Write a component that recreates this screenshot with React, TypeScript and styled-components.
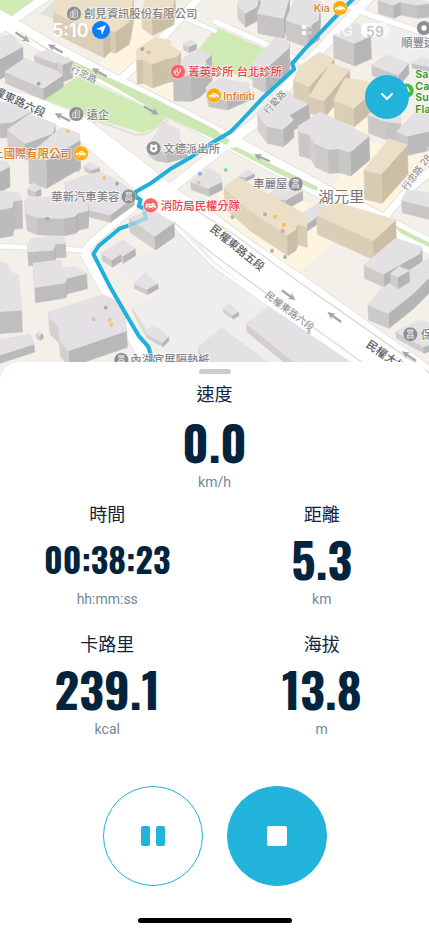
import React from "react";
import styled, { createGlobalStyle, css } from "styled-components";

const cyan = "#21b3da";
const navy = "#02243c";

const GlobalStyle = createGlobalStyle`
  * { box-sizing: border-box; }
  body {
    margin: 0;
    background: #ffffff;
    font-family: Roboto, "Noto Sans CJK TC", sans-serif;
    -webkit-font-smoothing: antialiased;
  }
`;

const Screen = styled.main`
  position: relative;
  display: flex;
  flex-direction: column;
  min-height: 100vh;
  overflow: hidden;
`;

const MapView = styled.svg`
  display: block;
  width: 100%;
  height: 388px;
  background: #f3f0ea;
`;

const MapText = styled.text<{ $color?: string; $size?: number; $weight?: number }>`
  font-family: Inter, "Noto Sans CJK TC", sans-serif;
  font-size: ${(p) => p.$size ?? 34}px;
  font-weight: ${(p) => p.$weight ?? 500};
  fill: ${(p) => p.$color ?? "#858588"};
  stroke: #ffffff;
  stroke-width: 5px;
  stroke-opacity: 0.7;
  stroke-linejoin: round;
  paint-order: stroke;
`;

const StatusBar = styled.header`
  position: absolute;
  inset: 20px 40px auto 52px;
  display: flex;
  align-items: center;
  justify-content: space-between;
  height: 20px;
  color: #ffffff;
  font-family: Inter, sans-serif;
  font-size: 18px;
  font-weight: 600;
`;

const StatusGroup = styled.div<{ $gap: number }>`
  display: flex;
  align-items: center;
  gap: ${(p) => p.$gap}px;
`;

const Network = styled.span`
  font-size: 15px;
  font-weight: 500;
  opacity: 0.85;
`;

const Battery = styled.span`
  display: grid;
  place-items: center;
  width: 28px;
  height: 14px;
  border-radius: 5px;
  background: linear-gradient(90deg, #ffffff 58%, #ffffff99 58%);
  color: #c9c7c5;
  font-size: 14px;
`;

const CollapseButton = styled.button`
  position: absolute;
  top: 75px;
  right: 20px;
  display: grid;
  place-items: center;
  width: 44px;
  height: 44px;
  padding: 0;
  border: 0;
  border-radius: 50%;
  background: ${cyan};
`;

const Sheet = styled.section`
  position: relative;
  display: flex;
  flex: 1;
  flex-direction: column;
  align-items: center;
  margin-top: -26px;
  padding: 7px 0 8px;
  border-radius: 20px 20px 0 0;
  background: #ffffff;
`;

const Handle = styled.div`
  width: 32px;
  height: 5px;
  border-radius: 3px;
  background: #c9ccd1;
`;

const Metrics = styled.div`
  display: grid;
  grid-template-columns: 1fr 1fr;
  width: 100%;
  margin-top: 9px;
`;

const MetricLabel = styled.h2`
  margin: 0;
  color: #12233f;
  font-size: 18px;
  font-weight: 400;
  line-height: 24px;
`;

const MetricValue = styled.div<{ $small?: boolean }>`
  height: 64px;
  color: ${navy};
  font-family: Oswald, Roboto, sans-serif;
  font-size: ${(p) => (p.$small ? 34 : 48)}px;
  font-weight: 700;
  line-height: 64px;
`;

const MetricUnit = styled.div`
  color: #71879a;
  font-size: 14px;
  line-height: 16px;
`;

const MetricBox = styled.div<{ $wide?: boolean }>`
  display: flex;
  flex-direction: column;
  align-items: center;
  height: 130px;
  ${(p) => p.$wide && css`
    grid-column: 1 / -1;
    height: 120px;

    ${MetricValue} {
      height: 67px;
      line-height: 70px;
    }
  `}
`;

const Controls = styled.div`
  display: flex;
  gap: 24px;
  margin-top: 23px;
`;

const RoundButton = styled.button<{ $filled?: boolean }>`
  display: grid;
  place-items: center;
  width: 100px;
  height: 100px;
  padding: 0;
  border: 1px solid ${cyan};
  border-radius: 50%;
  background: ${(p) => (p.$filled ? cyan : "#ffffff")};
`;

const HomeIndicator = styled.div`
  width: 154px;
  height: 5px;
  margin-top: auto;
  border-radius: 3px;
  background: #000000;
`;

/* ---------- map drawing ---------- */

type Tone = "g" | "t";
type BuildingData = [Tone, number, string];

const shades: Record<Tone, { roof: string; light: number[]; dark: number[] }> = {
  g: { roof: "#e3e1e3", light: [212, 208, 208], dark: [182, 181, 182] },
  t: { roof: "#ecdfc8", light: [224, 211, 188], dark: [203, 190, 167] },
};

const buildings: BuildingData[] = [
  ["t", 65, "162,-10 160,35 310,108 330,90 345,95 385,68 390,50 400,-10"],
  ["t", 55, "425,30 440,-10 525,-10 518,20 455,52"],
  ["t", 72, "410,150 465,112 510,122 512,138 542,155 530,170 500,176 455,192 430,178 410,180"],
  ["g", 18, "550,132 572,120 588,130 565,140"],
  ["g", 78, "520,225 555,170 600,150 634,165 615,182 620,192 595,215 572,226"],
  ["g", 60, "-10,110 35,105 68,140 -10,182"],
  ["g", 22, "103,165 140,150 190,172 170,190"],
  ["g", 52, "172,182 200,170 216,182 186,194"],
  ["g", 35, "15,215 75,175 188,225 130,265"],
  ["g", 45, "-10,305 40,308 92,335 40,365 -10,370"],
  ["g", 50, "22,390 88,342 165,372 158,400 75,430"],
  ["g", 85, "86,465 185,382 238,402 240,420 138,480"],
  ["g", 15, "252,498 270,488 298,502 275,510"],
  ["g", 20, "82,565 100,550 122,565 105,575"],
  ["g", 60, "-10,480 22,485 28,500 -10,520"],
  ["g", 85, "-10,572 58,580 66,600 40,602 36,622 -10,630"],
  ["g", 22, "195,548 260,525 300,516 340,535 402,575 402,592 330,645 250,625 210,590"],
  ["g", 52, "75,600 92,590 150,592 240,590 264,610 262,632 235,638 225,648 190,655 110,652 80,640"],
  ["g", 42, "388,655 450,630 522,668 465,708"],
  ["g", 32, "445,435 490,368 538,390 540,420 560,440 500,456 465,450"],
  ["g", 24, "572,545 625,503 662,525 665,545 625,565"],
  ["g", 42, "712,15 722,-20 780,-20 770,20 735,40"],
  ["g", 60, "772,40 800,-30 868,-10 850,55"],
  ["g", 60, "858,60 885,-5 960,5 955,60 922,82"],
  ["g", 70, "757,190 825,113 868,128 865,145 795,208"],
  ["g", 30, "618,262 660,235 745,250 748,270 680,300 625,290"],
  ["g", 52, "772,340 800,310 860,275 928,310 868,345 880,360 848,388 800,378"],
  ["g", 68, "1000,105 1072,68 1112,108 1062,130"],
  ["g", 32, "1115,195 1160,165 1225,190 1195,225"],
  ["g", 15, "1235,190 1262,172 1290,182 1290,200"],
  ["t", 52, "880,240 897,200 958,157 1002,177 927,260"],
  ["t", 50, "927,290 992,190 1048,210 972,302"],
  ["t", 56, "1002,300 1035,235 1105,245 1120,275 1060,325"],
  ["g", 40, "1134,0 1200,-20 1290,10 1250,15 1200,5 1180,15"],
  ["g", 72, "895,378 960,337 1107,408 1050,456 1018,446 985,448 945,430 930,405 897,395"],
  ["g", 55, "1104,345 1130,320 1200,330 1202,370 1160,365"],
  ["g", 58, "1190,395 1252,330 1300,340 1300,390 1222,408"],
  ["t", 88, "1092,510 1167,417 1222,435 1144,522"],
  ["g", 12, "717,527 742,510 762,520 735,532"],
  ["g", 28, "797,590 852,550 907,572 857,600"],
  ["g", 22, "862,668 962,605 987,625 907,680"],
  ["t", 62, "672,562 712,532 918,645 920,680 892,672 885,690 862,705 750,632"],
  ["t", 58, "950,645 1002,605 1187,660 1120,722"],
  ["g", 38, "1205,600 1222,570 1290,580 1290,622"],
  ["g", 42, "82,735 95,715 160,710 192,712 196,730 165,732 160,750 85,755"],
  ["g", 46, "100,790 180,780 190,805 222,800 260,820 200,835 195,848 105,862"],
  ["g", 66, "-10,785 20,788 30,815 55,825 65,930 -10,935"],
  ["g", 24, "-10,1020 90,1003 102,1032 -10,1068"],
  ["g", 50, "146,935 310,885 345,900 375,940 380,992 205,1052 180,1020 176,980 150,955"],
  ["g", 15, "108,1000 118,994 128,1000 118,1006"],
  ["g", 22, "305,760 370,720 405,745 368,768 362,762 335,780"],
  ["g", 16, "402,850 435,820 473,850 440,868"],
  ["g", 12, "397,925 440,990 465,978 505,1010 487,1028 440,1002"],
  ["g", 30, "595,1040 665,983 820,1100 620,1090"],
  ["g", 12, "669,925 687,912 715,935 697,945"],
  ["g", 26, "739,970 807,920 1070,1100 910,1110"],
  ["g", 40, "1092,795 1187,715 1265,740 1260,760 1150,822"],
  ["g", 45, "1104,915 1140,870 1230,810 1300,765 1300,820 1240,880 1165,940"],
  ["g", 34, "1172,820 1197,800 1227,812 1192,832"],
  ["g", 20, "1187,995 1262,960 1300,975 1300,1030 1270,1040"],
];

function Building({ data }: { data: BuildingData }) {
  const [tone, h, raw] = data;
  const pts = raw.split(" ").map((p) => p.split(",").map(Number));
  const area = pts.reduce((s, [x, y], i) => {
    const [nx, ny] = pts[(i + 1) % pts.length];
    return s + x * ny - nx * y;
  }, 0);
  const ring = area > 0 ? pts : [...pts].reverse();
  const { roof, light, dark } = shades[tone];
  const walls = ring
    .map((a, i) => ({ a, b: ring[(i + 1) % ring.length] }))
    .filter(({ a, b }) => b[0] < a[0])
    .sort((p, q) => p.a[1] + p.b[1] - q.a[1] - q.b[1]);
  return (
    <g strokeLinejoin="round">
      {walls.map(({ a, b }, i) => {
        const dx = b[0] - a[0];
        const dy = b[1] - a[1];
        const t = Math.min(1, Math.max(0, 0.6 + (0.9 * dy) / Math.hypot(dx, dy)));
        const fill = `rgb(${light.map((c, k) => Math.round(c + (dark[k] - c) * t)).join(",")})`;
        return (
          <polygon
            key={i}
            fill={fill}
            stroke={fill}
            strokeWidth={2}
            points={`${a} ${b} ${b[0] + 2},${b[1] + h} ${a[0] + 2},${a[1] + h}`}
          />
        );
      })}
      <polygon points={raw} fill={roof} stroke={roof} strokeWidth={3} />
    </g>
  );
}

const roads: [number, string][] = [
  [24, "M-10 95L140-10"],
  [22, "M350 250L440 165L545 50L600-10"],
  [12, "M545 50L650 95"],
  [16, "M640 62L780 125L915 190"],
  [16, "M1030 10L1110 45L1290 105"],
  [28, "M500 575L680 432L770 365L900 215L1110-10"],
  [46, "M-10 50L160 150L350 250L560 355L690 425L980 580L1150 665L1300 745"],
  [22, "M1300 505L1215 580L1150 655"],
  [22, "M435 590L270 733L255 755"],
  [14, "M255 752L200 747L-10 738"],
  [34, "M255 755L330 890L450 1100"],
];

const mainRoad =
  "M-10 262L110 292L255 352L430 485L540 575L642 640L762 728L900 820L1012 900L1162 1008L1300 1105V1170H1160L1062 1093L792 910L642 802L520 680L400 565L250 432L165 372L-10 300Z";

const route = "M1062-6L997 60L912 150L877 190L882 208L792 290L712 375L692 395L642 425L575 470L510 508L455 548L405 577L408 592L422 600L416 618L430 625";
const routeTail = "M385 677L360 685L296 738L280 762L330 860L400 980L418 1010L445 1040L460 1090";

const dots: [number, number, string][] = [
  [427, 147, "#a9a6a3"], [446, 157, "#f5bd63"], [116, 251, "#aaa9aa"], [203, 393, "#f5c27b"],
  [233, 509, "#b9b8b6"], [313, 534, "#f5c27b"], [351, 551, "#aaa9aa"], [142, 656, "#aaa9aa"],
  [600, 521, "#82aef2"], [596, 548, "#f5c27b"], [677, 510, "#86e0a0"], [697, 651, "#b9b1a8"],
  [795, 643, "#b9b1a8"], [825, 650, "#f5bd63"], [852, 674, "#f5bd63"], [848, 693, "#f29c94"],
  [1154, 584, "#f5bd63"], [816, 752, "#b5b0aa"], [855, 771, "#b5b0aa"], [317, 923, "#b0afb0"],
  [281, 958, "#f5a8cd"], [329, 959, "#f5c27b"], [334, 974, "#f5c27b"], [927, 995, "#c0bdb8"],
];

const arrows: [number, number, number][] = [
  [68, 111, 33], [166, 146, 209], [298, 218, 209], [454, 331, 29], [187, 352, 206],
  [786, 474, 204], [866, 885, 36], [1003, 952, 215], [1227, 1069, 214],
];

type PinKind = "car" | "office" | "shop" | "health" | "badge" | "fire" | "tree" | "dot";
const pins: [number, number, string, PinKind][] = [
  [222, 41, "#8f8e90", "office"], [229, 342, "#8f8e90", "office"],
  [534, 215, "#f96368", "health"], [642, 286, "#ffac08", "car"],
  [1020, 24, "#ffac08", "car"], [1272, 84, "#8f8e90", "dot"],
  [243, 460, "#ffac08", "car"], [461, 445, "#8f8e90", "badge"],
  [386, 590, "#8f8e90", "shop"], [452, 616, "#f96368", "fire"],
  [887, 552, "#8f8e90", "shop"], [364, 1080, "#8f8e90", "shop"],
  [1231, 1003, "#8f8e90", "shop"], [1220, 272, "#45bd3c", "tree"],
];

function PinGlyph({ kind }: { kind: PinKind }) {
  switch (kind) {
    case "car":
      return <path fill="#fff" fillRule="evenodd" d="M-14-1L-7-2L-3-7H5L10-2Q15-1 15 3V6H11A4 4 0 0 1 3 6H-4A4 4 0 0 1-12 6H-15V1ZM-3-2H1V-5H-1ZM3-5V-2H7L4-5ZM-8 3A3 3 0 1 0-8 9A3 3 0 0 0-8 3ZM7 3A3 3 0 1 0 7 9A3 3 0 0 0 7 3Z" />;
    case "office":
      return <path fill="none" stroke="#eeeeef" strokeWidth={2.4} d="M-11 11V-3L-3-7V11ZM-3 11V-10L4-13L10-9V11ZM-8 0V1M-8 5V6M1-6H6M1-1H6M1 4H6" />;
    case "shop":
      return <path fill="none" stroke="#eeeeef" strokeWidth={2.6} strokeLinejoin="round" d="M-8-13H8V-7H-8ZM-3-13V-7M3-13V-7M-9 6L-6-2H6L9 6V12H5V9H-5V12H-9ZM-9 4H9M-5 6H-4M4 6H5" />;
    case "health":
      return <path fill="none" stroke="#fff" strokeWidth={2.6} strokeLinecap="round" d="M-1-9H-3V-3A5 5 0 0 0 7-3V-9H5M2 2V7A5 5 0 0 1-7 8M-9-3A3 3 0 1 0-9 3A3 3 0 0 0-9-3M-9 3Q-11 8-7 10" />;
    case "badge":
      return (
        <g>
          <path fill="#fff" d="M-11-10L-6-12L0-9L6-12L11-10L9-5L12 3Q10 10 0 13Q-10 10-12 3L-9-5Z" />
          <circle r={4} cy={1} fill="#8f8e90" />
        </g>
      );
    case "fire":
      return <path fill="#fff" fillRule="evenodd" d="M-15-5H5V-8H9V-5H12L16 1V7H12A4 4 0 0 1 4 7H-4A4 4 0 0 1-12 7H-15ZM-12-1H3V1H-12ZM8-2H11L13 1H8ZM-8 4A3 3 0 1 0-8 10A3 3 0 0 0-8 4ZM8 4A3 3 0 1 0 8 10A3 3 0 0 0 8 4Z" />;
    case "tree":
      return <path fill="#fff" d="M2-13L11 3H4V11H0V3H-7Z" />;
    default:
      return <circle r={8} fill="#ffffff" />;
  }
}

function CityMap() {
  return (
    <MapView viewBox="0 0 1287 1164" preserveAspectRatio="xMidYMin slice" role="img" aria-label="地圖">
      <rect width="1287" height="1164" fill="#f3f0ea" />
      <path fill="#fdf4e1" d="M310 130L400 60L530 20L350 250L300 205ZM400 170L545 140L530 310L400 245ZM860 250L1160 300L1090 430L920 350ZM1100 420L1300 470L1150 660L980 580ZM660 560L1000 620L1120 760L1010 720L895 818L650 640Z" />
      <path fill="#efeeed" d="M345 805L470 745L530 680L640 800L1080 1110H500L395 925L460 890ZM1110 60L1300 110V220L1120 160Z" />
      <path fill="#cfeab2" d="M-10-10H128L40 52L-10 40ZM232 228L500 352L480 373L465 385L425 398L340 372L290 358L135 300ZM585 160L650 82L800 150L757 195L757 240L640 200Z" />
      <path fill="#dbe3db" d="M165 0L120 42L160 55V0Z" />
      <path d="M260 385L290 362L400 402Q430 410 455 392L505 360" fill="none" stroke="#dfdcd7" strokeWidth={5} />
      <g fill="none" strokeLinejoin="round">
        {roads.map(([w, d]) => <path key={d} d={d} stroke="#e2e0dd" strokeWidth={w + 5} />)}
        <path d={mainRoad} fill="#fff" stroke="#e2e0dd" strokeWidth={4} />
        {roads.map(([w, d]) => <path key={d} d={d} stroke="#ffffff" strokeWidth={w} />)}
      </g>
      <path d={mainRoad} fill="#fff" />
      <path fill="none" stroke="#dcdad7" strokeWidth={4} d="M540 600L700 702L900 848L1010 925L1160 1030L1290 1120M520 665L642 765L792 875L1090 1090" />
      <path fill="#f0eeea" d="M525 672L570 700L650 790L742 862L640 790Z" />
      <path fill="#cde7b4" d="M30 78L160 155L290 216L460 293L645 388L690 421L680 435L600 398L480 342L350 265L160 162ZM688 444L712 442L840 505L955 562L950 574L830 518ZM1180 674L1300 734V748L1200 698Z" />
      {buildings.map((b, i) => <Building key={i} data={b} />)}
      {dots.map(([x, y, c], i) => <circle key={i} cx={x} cy={y} r={6} fill={c} />)}
      {arrows.map(([x, y, a], i) => (
        <path key={i} transform={`translate(${x} ${y}) rotate(${a})`} fill="#a6a6a8" d="M-25-3H8L3-11L26 1L3 11L8 4H-25Z" />
      ))}
      <g fill="none" stroke="#1fb1da" strokeWidth={12} strokeLinejoin="round">
        <path d={route} />
        <path d={routeTail} />
        <path d="M430 625L438 655L385 677" opacity={0.3} />
      </g>
      {pins.map(([x, y, c, kind], i) => (
        <g key={i} transform={`translate(${x} ${y})`}>
          <circle r={22} fill={c} stroke="#fff" strokeOpacity={0.6} strokeWidth={2} />
          <PinGlyph kind={kind} />
        </g>
      ))}
      <MapText x={252} y={54}>創見資訊股份有限公司</MapText>
      <MapText x={260} y={356}>遠企</MapText>
      <MapText x={565} y={228} $color="#e9434f">菁英診所 台北診所</MapText>
      <MapText x={670} y={299} $color="#df7a18" $size={32}>Infiniti</MapText>
      <MapText x={941} y={36} $color="#df7a18" $size={32}>Kia</MapText>
      <MapText x={1204} y={142}>順豐速運</MapText>
      <MapText x={215} y={474} textAnchor="end" $color="#df7a18">上國際有限公司</MapText>
      <MapText x={490} y={459}>文德派出所</MapText>
      <MapText x={154} y={603}>華新汽車美容</MapText>
      <MapText x={482} y={631} $color="#e9434f">消防局民權分隊</MapText>
      <MapText x={760} y={565}>車麗屋</MapText>
      <MapText x={955} y={607} $size={46} $weight={400} $color="#77777b">湖元里</MapText>
      <MapText x={391} y={1093}>內湖宜展隔熱紙</MapText>
      <MapText x={1262} y={1016}>保養</MapText>
      {["Sa", "Ca", "Su", "Fla"].map((t, i) => (
        <MapText key={t} x={1246} y={234 + i * 35} $color="#2c9a2c" $size={32} $weight={600}>{t}</MapText>
      ))}
      <MapText transform="translate(210 212) rotate(27)" $size={28} $weight={400}>行忠路</MapText>
      <MapText transform="translate(-50 268) rotate(25)" $size={33} $color="#606064">民權東路六段</MapText>
      <MapText transform="translate(803 344) rotate(-47)" $size={28} $weight={400}>行愛路</MapText>
      <MapText transform="translate(1220 574) rotate(-54)" $size={28} $weight={400}>行忠路 28 巷</MapText>
      <MapText transform="translate(628 690) rotate(39)" $size={33} $color="#606064">民權東路五段</MapText>
      <MapText transform="translate(793 889) rotate(37)" $size={29} $weight={400}>民權東路六段</MapText>
      <MapText transform="translate(1096 1039) rotate(35)" $size={34} $color="#606064">民權大橋</MapText>
    </MapView>
  );
}

interface MetricProps {
  label: string;
  value: string;
  unit: string;
  wide?: boolean;
  small?: boolean;
}

function Metric({ label, value, unit, wide, small }: MetricProps) {
  return (
    <MetricBox $wide={wide}>
      <MetricLabel>{label}</MetricLabel>
      <MetricValue $small={small}>{value}</MetricValue>
      <MetricUnit>{unit}</MetricUnit>
    </MetricBox>
  );
}

export default function App() {
  return (
    <Screen>
      <GlobalStyle />
      <CityMap />
      <StatusBar>
        <StatusGroup $gap={3}>
          <span>5:10</span>
          <svg width="18" height="18" viewBox="0 0 18 18" aria-hidden="true">
            <circle cx="9" cy="9" r="9" fill="#0b7dfb" />
            <path d="M14 4L10 14L9 9L4 8Z" fill="#fff" />
          </svg>
        </StatusGroup>
        <StatusGroup $gap={18}>
          <svg width="12" height="12" viewBox="0 0 12 12" fill="#fff" aria-hidden="true">
            <rect y="1" width="4" height="4" rx="1" />
            <rect y="7" width="4" height="4" rx="1" />
            <rect x="6" y="1" width="4" height="4" rx="1" opacity="0.3" />
            <rect x="6" y="7" width="4" height="4" rx="1" opacity="0.3" />
          </svg>
          <StatusGroup $gap={8}>
            <Network>4G</Network>
            <Battery>59</Battery>
          </StatusGroup>
        </StatusGroup>
      </StatusBar>
      <CollapseButton aria-label="收合">
        <svg width="14" height="10" viewBox="0 0 14 10" fill="none" aria-hidden="true">
          <path d="M2 2L7 7L12 2" stroke="#fff" strokeWidth="2" strokeLinecap="round" strokeLinejoin="round" />
        </svg>
      </CollapseButton>
      <Sheet>
        <Handle />
        <Metrics>
          <Metric wide label="速度" value="0.0" unit="km/h" />
          <Metric small label="時間" value="00:38:23" unit="hh:mm:ss" />
          <Metric label="距離" value="5.3" unit="km" />
          <Metric label="卡路里" value="239.1" unit="kcal" />
          <Metric label="海拔" value="13.8" unit="m" />
        </Metrics>
        <Controls>
          <RoundButton aria-label="暫停">
            <svg width="26" height="22" viewBox="0 0 26 22" fill={cyan} aria-hidden="true">
              <rect x="1" y="1" width="9" height="20" rx="2" />
              <rect x="16" y="1" width="9" height="20" rx="2" />
            </svg>
          </RoundButton>
          <RoundButton $filled aria-label="停止">
            <svg width="20" height="20" viewBox="0 0 20 20" fill="#fff" aria-hidden="true">
              <rect width="20" height="20" rx="2" />
            </svg>
          </RoundButton>
        </Controls>
        <HomeIndicator />
      </Sheet>
    </Screen>
  );
}
